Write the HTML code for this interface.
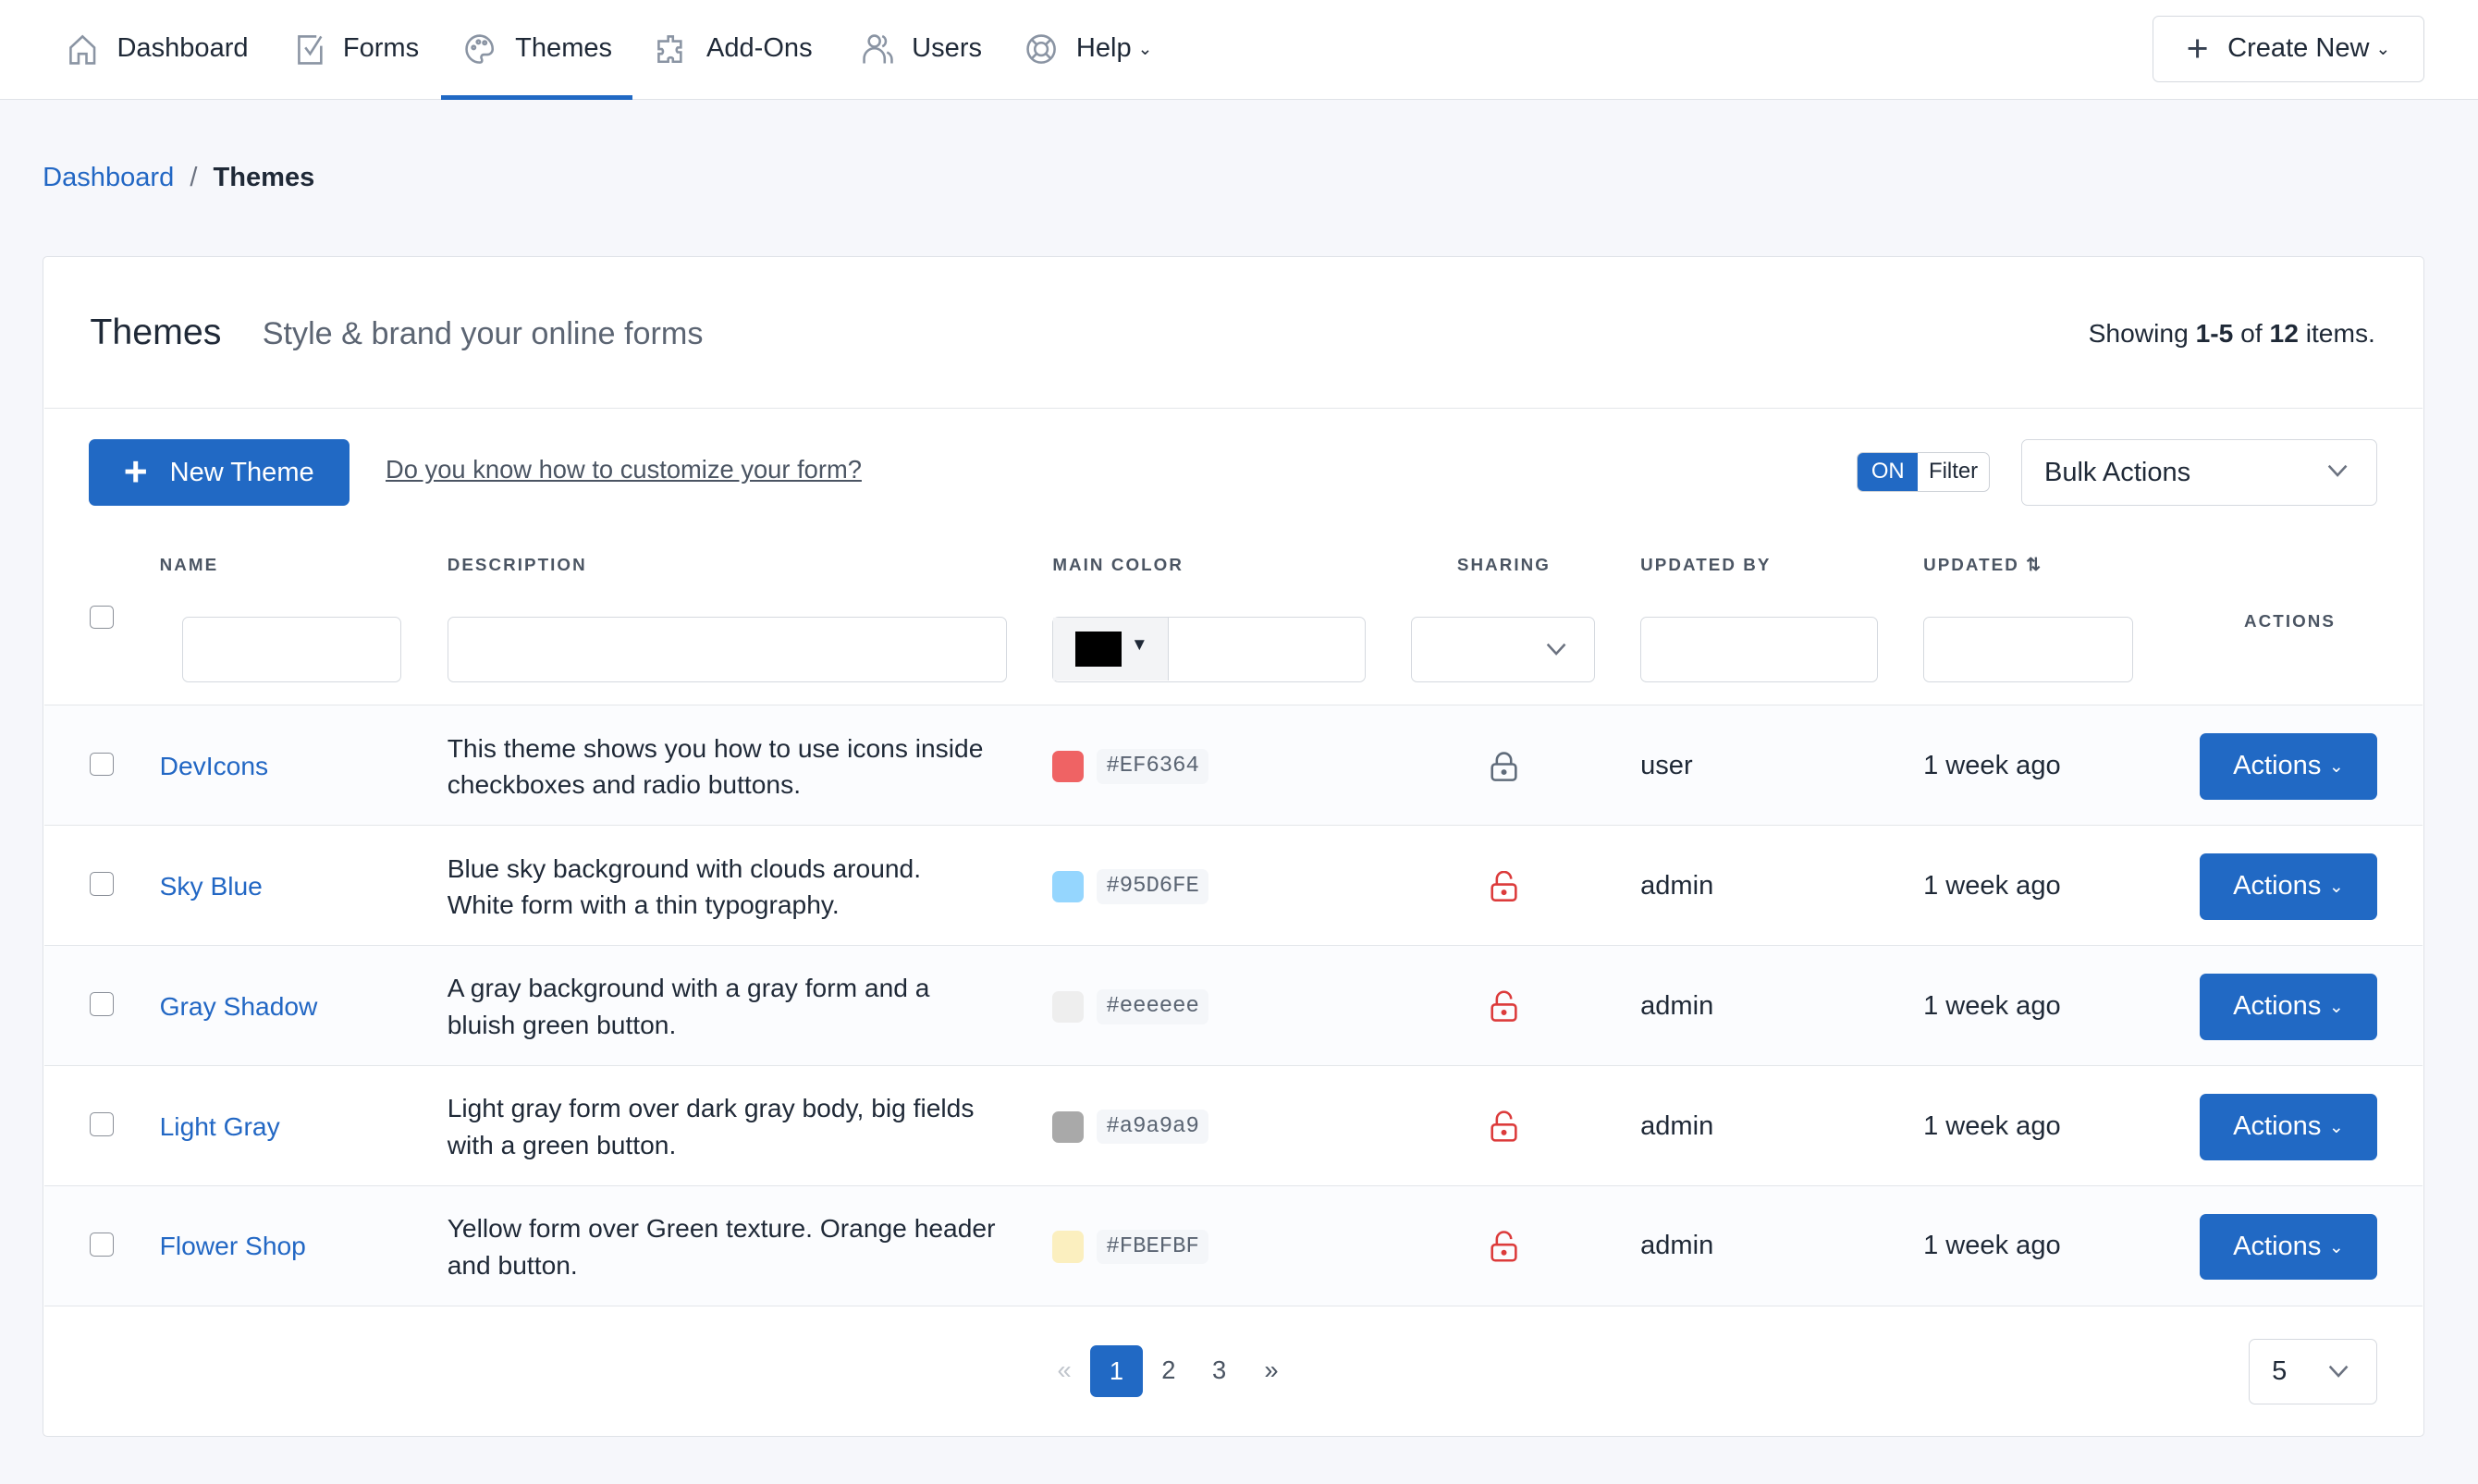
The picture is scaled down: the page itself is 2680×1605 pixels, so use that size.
<!DOCTYPE html>
<html><head><meta charset="utf-8">
<style>
*{box-sizing:border-box;margin:0;padding:0}
html,body{width:2680px;height:1605px;overflow:hidden;background:#f6f7fb}
body{font-family:"Liberation Sans",sans-serif;color:#1f2937}
#w{zoom:1.70918;width:1568px;height:939px;position:relative}
.a{position:absolute}
.nav{left:0;top:0;width:1568px;height:63px;background:#fff;border-bottom:1px solid #e0e3e8}
.ni{position:absolute;top:21px;font-size:17px;color:#1f2937;display:flex;align-items:center}
.ni svg{margin-right:12px}
.btn{border-radius:4px;display:flex;align-items:center;justify-content:center}
.card{left:27px;top:162px;width:1507px;height:747px;background:#fff;border:1px solid #dfe2e7;border-radius:3px}
.inp{position:absolute;border:1px solid #d5d9df;border-radius:4px;background:#fff;height:42px;top:390px}
.th{position:absolute;top:351px;font-size:11px;letter-spacing:1.2px;color:#4b5563;font-weight:bold}
.cb{position:absolute;left:57px;width:15px;height:15px;border:1px solid #8a8f98;border-radius:3px;background:#fff}
.row{position:absolute;left:28px;width:1505px;height:76px;border-top:1px solid #e3e6ea}
.nm{position:absolute;left:101px;font-size:16.5px;color:#2267c4}
.ds{position:absolute;left:283px;font-size:16.5px;line-height:23px;color:#1f2937;white-space:nowrap}
.sw{position:absolute;left:666px;width:20px;height:20px;border-radius:4px}
.hx{position:absolute;left:694px;height:22px;padding:0 6px;background:#f4f6f9;border-radius:4px;font-family:"Liberation Mono",monospace;font-size:14px;line-height:22px;color:#5a6472}
.tx{position:absolute;font-size:17px;color:#1f2937}
.ab{position:absolute;left:1392px;width:112px;height:42px;background:#2169c4;color:#fff;font-size:17px;border-radius:4px;display:flex;align-items:center;justify-content:center}
</style></head><body><div id="w">
<div class="a nav"></div>
<div class="ni" style="left:43px"><svg width="19" height="20" viewBox="0 0 19 20" fill="none" stroke="#8a94a3" stroke-width="1.5"><path d="M2 9L9.5 2 17 9v10H12v-6H7v6H2z"/></svg>Dashboard</div>
<div class="ni" style="left:187px"><svg width="18" height="20" viewBox="0 0 18 20" fill="none" stroke="#8a94a3" stroke-width="1.5"><path d="M13 2H2v17h14V8"/><path d="M6 9l3 4 7-11"/></svg>Forms</div>
<div class="ni" style="left:294px"><svg width="20" height="20" viewBox="0 0 20 20" fill="none" stroke="#8a94a3" stroke-width="1.5"><path d="M10 1.5a8.5 8.5 0 1 0 0 17c1.5 0 1.5-1.5 1-2.5s0-2.5 1.5-2.5h2c2 0 3.5-1.5 3.5-3.5A8.5 8.5 0 0 0 10 1.5z"/><circle cx="6" cy="9" r="1"/><circle cx="9" cy="5.5" r="1"/><circle cx="13" cy="6" r="1"/></svg>Themes</div>
<div class="a" style="left:279px;top:60px;width:121px;height:3px;background:#2169c4"></div>
<div class="ni" style="left:415px"><svg width="20" height="20" viewBox="0 0 20 20" fill="none" stroke="#8a94a3" stroke-width="1.5"><path d="M8 2h3v3h5v4h-2a2 2 0 0 0 0 3h2v6h-5v-2a2 2 0 0 0-3 0v2H2v-5h2a2 2 0 0 0 0-3H2V5h6z"/></svg>Add-Ons</div>
<div class="ni" style="left:545px"><svg width="20" height="20" viewBox="0 0 20 20" fill="none" stroke="#8a94a3" stroke-width="1.5"><circle cx="8" cy="5" r="3.5"/><path d="M1.5 19v-3a5 5 0 0 1 13 0v3"/><path d="M13 1.8a3.5 3.5 0 0 1 0 6.5M16 12a5 5 0 0 1 3 4.5V19"/></svg>Users</div>
<div class="ni" style="left:649px"><svg width="20" height="20" viewBox="0 0 20 20" fill="none" stroke="#8a94a3" stroke-width="1.5"><circle cx="10" cy="10" r="8.5"/><circle cx="10" cy="10" r="4"/><path d="M4 4l3 3M16 4l-3 3M4 16l3-3M16 16l-3-3"/></svg>Help <span style="font-size:11px;margin-left:4px">&#8964;</span></div>
<div class="a btn" style="left:1362px;top:10px;width:172px;height:42px;border:1px solid #d5d9df;background:#fff;font-size:17px;color:#1f2937"><span style="font-size:24px;font-weight:300;margin-right:12px;color:#374151">+</span>Create New <span style="font-size:11px;margin-left:4px">&#8964;</span></div>

<div class="a" style="left:27px;top:103px;font-size:17px"><span style="color:#2267c4">Dashboard</span><span style="color:#6b7280;margin:0 10px">/</span><span style="color:#1f2937;font-weight:bold">Themes</span></div>

<div class="a card"></div>
<div class="a" style="left:57px;top:197px;font-size:23px;color:#1f2937">Themes</div>
<div class="a" style="left:166px;top:200px;font-size:20px;color:#5c6573">Style &amp; brand your online forms</div>
<div class="a" style="right:65px;top:201px;font-size:16.5px;color:#1f2937">Showing <b>1-5</b> of <b>12</b> items.</div>
<div class="a" style="left:28px;top:258px;width:1505px;border-top:1px solid #e3e6ea"></div>

<div class="a btn" style="left:56px;top:278px;width:165px;height:42px;background:#2169c4;color:#fff;font-size:17px"><span style="font-size:26px;font-weight:bold;margin-right:14px;line-height:20px">+</span>New Theme</div>
<div class="a" style="left:244px;top:288px;font-size:16px;color:#4b5563;text-decoration:underline">Do you know how to customize your form?</div>
<div class="a" style="left:1175px;top:286px;width:84px;height:25px;border:1px solid #ccd0d6;border-radius:4px;overflow:hidden;display:flex;font-size:14px"><div style="width:38px;background:#2169c4;color:#fff;display:flex;align-items:center;justify-content:center">ON</div><div style="flex:1;display:flex;align-items:center;justify-content:center;color:#1f2937">Filter</div></div>
<div class="a" style="left:1279px;top:278px;width:225px;height:42px;border:1px solid #d5d9df;border-radius:4px;font-size:17px;padding:11px 14px;color:#1f2937">Bulk Actions<svg class="a" style="right:18px;top:15px" width="13" height="9" viewBox="0 0 13 9" fill="none" stroke="#6b7280" stroke-width="1.5"><path d="M1 1l5.5 6L12 1"/></svg></div>

<div class="th" style="left:101px">NAME</div>
<div class="th" style="left:283px">DESCRIPTION</div>
<div class="th" style="left:666px">MAIN COLOR</div>
<div class="th" style="left:922px">SHARING</div>
<div class="th" style="left:1038px">UPDATED BY</div>
<div class="th" style="left:1217px">UPDATED <span style="letter-spacing:0">&#8645;</span></div>
<div class="th" style="left:1420px;top:387px">ACTIONS</div>
<div class="cb" style="top:383px"></div>
<div class="inp" style="left:115px;width:139px"></div>
<div class="inp" style="left:283px;width:354px"></div>
<div class="inp" style="left:666px;width:198px"><div class="a" style="left:0;top:0;width:73px;height:40px;background:#f3f4f6;border-right:1px solid #d5d9df"></div><div class="a" style="left:14px;top:9px;width:29px;height:22px;background:#000"></div><div class="a" style="left:49px;top:11px;font-size:11px">&#9660;</div></div>
<div class="inp" style="left:893px;width:116px"><svg class="a" style="right:17px;top:16px" width="13" height="9" viewBox="0 0 13 9" fill="none" stroke="#6b7280" stroke-width="1.5"><path d="M1 1l5.5 6L12 1"/></svg></div>
<div class="inp" style="left:1038px;width:150px"></div>
<div class="inp" style="left:1217px;width:133px"></div>

<div class="row" style="top:446px;background:#fbfcfe"></div>
<div class="row" style="top:522px"></div>
<div class="row" style="top:598px;background:#fbfcfe"></div>
<div class="row" style="top:674px"></div>
<div class="row" style="top:750px;background:#fbfcfe"></div>
<div class="row" style="top:826px;height:0"></div>

<div class="cb" style="top:476px"></div><div class="nm" style="top:475px">DevIcons</div>
<div class="ds" style="top:462px">This theme shows you how to use icons inside<br>checkboxes and radio buttons.</div>
<div class="sw" style="top:475px;background:#ef6364"></div><div class="hx" style="top:474px">#EF6364</div>
<svg class="a" style="left:943px;top:475px" width="17" height="20" viewBox="0 0 17 20" fill="none" stroke="#5f6b7a" stroke-width="1.5"><rect x="1" y="8.5" width="15" height="10" rx="2"/><path d="M4 8.5V6a4.5 4.5 0 0 1 9 0v2.5"/><circle cx="8.5" cy="13.5" r="1" fill="#5f6b7a"/></svg>
<div class="tx" style="left:1038px;top:475px">user</div><div class="tx" style="left:1217px;top:475px">1 week ago</div>
<div class="ab" style="top:464px">Actions <span style="font-size:11px;margin-left:5px">&#8964;</span></div>

<div class="cb" style="top:552px"></div><div class="nm" style="top:551px">Sky Blue</div>
<div class="ds" style="top:538px">Blue sky background with clouds around.<br>White form with a thin typography.</div>
<div class="sw" style="top:551px;background:#95d6fe"></div><div class="hx" style="top:550px">#95D6FE</div>
<div class="tx" style="left:1038px;top:551px">admin</div><div class="tx" style="left:1217px;top:551px">1 week ago</div>
<div class="ab" style="top:540px">Actions <span style="font-size:11px;margin-left:5px">&#8964;</span></div>

<div class="cb" style="top:628px"></div><div class="nm" style="top:627px">Gray Shadow</div>
<div class="ds" style="top:614px">A gray background with a gray form and a<br>bluish green button.</div>
<div class="sw" style="top:627px;background:#eeeeee"></div><div class="hx" style="top:626px">#eeeeee</div>
<div class="tx" style="left:1038px;top:627px">admin</div><div class="tx" style="left:1217px;top:627px">1 week ago</div>
<div class="ab" style="top:616px">Actions <span style="font-size:11px;margin-left:5px">&#8964;</span></div>

<div class="cb" style="top:704px"></div><div class="nm" style="top:703px">Light Gray</div>
<div class="ds" style="top:690px">Light gray form over dark gray body, big fields<br>with a green button.</div>
<div class="sw" style="top:703px;background:#a9a9a9"></div><div class="hx" style="top:702px">#a9a9a9</div>
<div class="tx" style="left:1038px;top:703px">admin</div><div class="tx" style="left:1217px;top:703px">1 week ago</div>
<div class="ab" style="top:692px">Actions <span style="font-size:11px;margin-left:5px">&#8964;</span></div>

<div class="cb" style="top:780px"></div><div class="nm" style="top:779px">Flower Shop</div>
<div class="ds" style="top:766px">Yellow form over Green texture. Orange header<br>and button.</div>
<div class="sw" style="top:779px;background:#fbefbf"></div><div class="hx" style="top:778px">#FBEFBF</div>
<div class="tx" style="left:1038px;top:779px">admin</div><div class="tx" style="left:1217px;top:779px">1 week ago</div>
<div class="ab" style="top:768px">Actions <span style="font-size:11px;margin-left:5px">&#8964;</span></div>

<svg class="a" style="left:943px;top:551px" width="17" height="248" viewBox="0 0 17 248" fill="none" stroke="#dc3b3b" stroke-width="1.5">
<g><rect x="1" y="8.5" width="15" height="10" rx="2"/><path d="M4 8.5V5a4.5 4.5 0 0 1 9 0"/><circle cx="8.5" cy="13.5" r="1" fill="#dc3b3b"/></g>
<g transform="translate(0,76)"><rect x="1" y="8.5" width="15" height="10" rx="2"/><path d="M4 8.5V5a4.5 4.5 0 0 1 9 0"/><circle cx="8.5" cy="13.5" r="1" fill="#dc3b3b"/></g>
<g transform="translate(0,152)"><rect x="1" y="8.5" width="15" height="10" rx="2"/><path d="M4 8.5V5a4.5 4.5 0 0 1 9 0"/><circle cx="8.5" cy="13.5" r="1" fill="#dc3b3b"/></g>
<g transform="translate(0,228)"><rect x="1" y="8.5" width="15" height="10" rx="2"/><path d="M4 8.5V5a4.5 4.5 0 0 1 9 0"/><circle cx="8.5" cy="13.5" r="1" fill="#dc3b3b"/></g>
</svg>

<div class="a" style="left:669px;top:858px;font-size:16px;color:#c0c5cc">&laquo;</div>
<div class="a" style="left:690px;top:851px;width:33px;height:33px;background:#2169c4;color:#fff;border-radius:4px;font-size:16px;display:flex;align-items:center;justify-content:center">1</div>
<div class="a" style="left:735px;top:858px;font-size:16px;color:#4b5563">2</div>
<div class="a" style="left:767px;top:858px;font-size:16px;color:#4b5563">3</div>
<div class="a" style="left:800px;top:858px;font-size:16px;color:#4b5563">&raquo;</div>
<div class="a" style="left:1423px;top:847px;width:81px;height:42px;border:1px solid #d5d9df;border-radius:4px;font-size:17px;padding:11px 14px;background:#fff">5<svg class="a" style="right:17px;top:16px" width="13" height="9" viewBox="0 0 13 9" fill="none" stroke="#6b7280" stroke-width="1.5"><path d="M1 1l5.5 6L12 1"/></svg></div>
</div></body></html>
